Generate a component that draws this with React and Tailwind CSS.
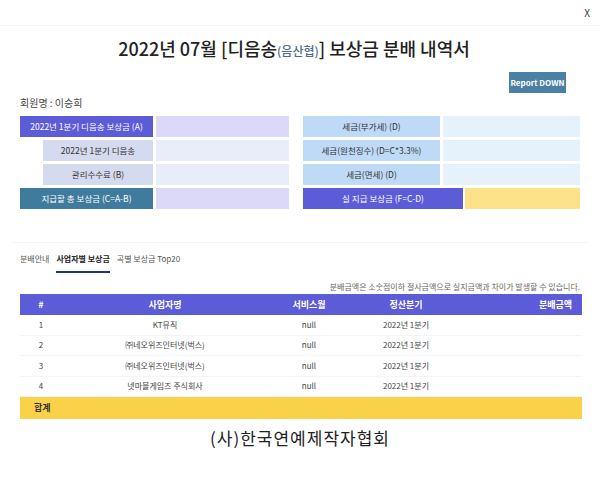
const font = {
  fontFamily: '"Noto Sans CJK KR", "Noto Sans", sans-serif',
};

function LeftRow({ label, labelClass, valueClass, indent }) {
  return (
    <div className="flex gap-[3px] h-[21px]">
      <div className={`flex items-center justify-center text-[8.5px] ${indent ? "ml-[23px] w-[110px]" : "w-[133px]"} ${labelClass}`}>
        {label}
      </div>
      <div className={`flex-1 ${valueClass}`}></div>
    </div>
  );
}

const rows = [
  { no: 1, name: "KT뮤직" },
  { no: 2, name: "㈜네오위즈인터넷(벅스)" },
  { no: 3, name: "㈜네오위즈인터넷(벅스)" },
  { no: 4, name: "넷마블게임즈 주식회사" },
];

export default function App() {
  return (
    <div className="w-[600px] h-[491px] bg-white text-[#333]" style={font}>
      {/* Close bar */}
      <div className="h-[26px] border-b border-gray-100 flex justify-end items-center pr-[10px] text-[10px] text-gray-700">
        X
      </div>

      {/* Title */}
      <h1 className="mt-[10px] pr-[12px] text-center text-[18px] leading-[24px] font-medium text-[#222]">
        2022년 07월 [디음송<span className="text-[12px] text-[#4d6b8c]">(음산협)</span>] 보상금 분배 내역서
      </h1>

      <div className="flex justify-end pr-[34px] mt-[9px]">
        <button className="w-[57px] h-[21px] bg-[#4b7fa3] text-white text-[8px] font-bold">
          Report DOWN
        </button>
      </div>

      <div className="px-[20px] mt-[3px] text-[10px] leading-[14px] text-[#444]">회원명 : 이승희</div>

      {/* Summary tables */}
      <div className="flex mt-[6px] pl-[20px] pr-[20px] gap-[14px]">
        <div className="w-[269px] flex flex-col gap-[3px]">
          <LeftRow label="2022년 1분기 디음송 보상금 (A)" labelClass="bg-[#5c5cd8] text-white" valueClass="bg-[#dcd8f8]" />
          <LeftRow indent label="2022년 1분기 디음송" labelClass="bg-[#d5dbee] text-[#333]" valueClass="bg-[#e9edf9]" />
          <LeftRow indent label="관리수수료 (B)" labelClass="bg-[#d5dbee] text-[#333]" valueClass="bg-[#e9edf9]" />
          <LeftRow label="지급할 총 보상금 (C=A-B)" labelClass="bg-[#3f7b9c] text-white" valueClass="bg-[#dcd8f8]" />
        </div>
        <div className="flex-1 flex flex-col gap-[3px]">
          {["세금(부가세) (D)", "세금(원천징수) (D=C*3.3%)", "세금(면세) (D)"].map((t) => (
            <div key={t} className="flex gap-[3px] h-[21px]">
              <div className="w-[137px] flex items-center justify-center text-[8.5px] bg-[#bfdaf6] text-[#333]">{t}</div>
              <div className="flex-1 bg-[#e5f2fc]"></div>
            </div>
          ))}
          <div className="flex gap-[2px] h-[21px]">
            <div className="w-[160px] flex items-center justify-center text-[8.5px] bg-[#5c5cd8] text-white">
              실 지급 보상금 (F=C-D)
            </div>
            <div className="flex-1 bg-[#fde28a]"></div>
          </div>
        </div>
      </div>

      <div className="mx-[10px] mt-[33px] border-t border-gray-100"></div>

      {/* Tabs */}
      <div className="flex gap-[7px] px-[20px] text-[8px] leading-[12px]">
        <div className="pt-[10px] pb-[6px] text-[#555]">분배안내</div>
        <div className="pt-[10px] pb-[6px] font-bold text-[#222] border-b-2 border-[#1f3b5c]">사업자별 보상금</div>
        <div className="pt-[10px] pb-[6px] text-[#555]">곡별 보상금 Top20</div>
      </div>

      <div className="mt-[8px] pr-[20px] text-right text-[8px] leading-[12px] text-[#666]">
        분배금액은 소숫점이하 절사금액으로 실지금액과 차이가 발생할 수 있습니다.
      </div>

      {/* Table */}
      <div className="ml-[20px] w-[562px] mt-[1px]">
        <div className="grid grid-cols-[42px_206px_82px_112px_1fr] h-[21px] items-center bg-[#5c5cd8] text-white text-[9px] font-semibold">
          <div className="text-center">#</div>
          <div className="text-center">사업자명</div>
          <div className="text-center">서비스월</div>
          <div className="text-center">정산분기</div>
          <div className="text-right pr-[10px]">분배금액</div>
        </div>
        {rows.map((r) => (
          <div key={r.no} className="grid grid-cols-[42px_206px_82px_112px_1fr] h-[20.5px] items-center border-b border-gray-100 text-[8px] text-[#444]">
            <div className="text-center">{r.no}</div>
            <div className="text-center">{r.name}</div>
            <div className="text-center">null</div>
            <div className="text-center">2022년 1분기</div>
            <div></div>
          </div>
        ))}
        <div className="h-[22px] flex items-center bg-[#fad24a] pl-[14px] text-[9px] font-bold text-[#333]">합계</div>
      </div>

      <div className="mt-[7px] text-center text-[17px] leading-[24px] tracking-[1px] text-[#222]">
        (사)한국연예제작자협회
      </div>
    </div>
  );
}
